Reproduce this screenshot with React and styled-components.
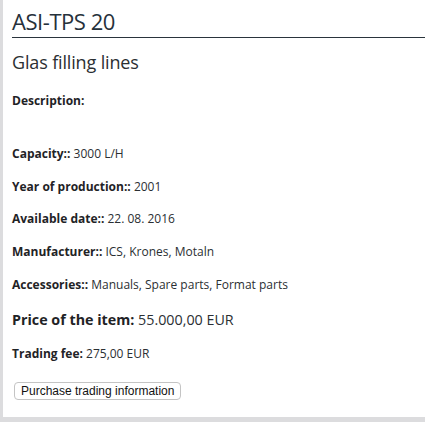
import styled, { createGlobalStyle } from "styled-components"

const Global = createGlobalStyle`
  body {
    margin: 0;
    background: #fff;
    font-family: "Open Sans", "DejaVu Sans", sans-serif;
    color: #2b2f33;
  }
`

const Panel = styled.div`
  box-sizing: border-box;
  height: 422px;
  border-left: 3px solid #dcdcde;
  border-bottom: 5px solid #dcdcde;
  padding: 6px 0 0 9px;
`

const Title = styled.h1`
  margin: 0;
  font-size: 22px;
  font-weight: 400;
  line-height: 30px;
  color: #26313b;
  border-bottom: 1px solid #2a343c;
  padding-bottom: 1px;
  letter-spacing: -0.45px;
`

const Subtitle = styled.h2`
  margin: 12px 0 19px;
  font-size: 18px;
  font-weight: 400;
  line-height: 24px;
  letter-spacing: -0.15px;
`

const Row = styled.p`
  margin: 0;
  font-size: 12px;
  line-height: 16px;
  height: ${(p) => p.h || 33}px;
  b {
    font-weight: 700;
    color: #1f2326;
  }
`

const Price = styled.p`
  margin: 0;
  font-size: 14.3px;
  line-height: 20px;
  height: 36px;
  b {
    color: #1f2326;
  }
`

const Button = styled.button`
  margin: 0 0 0 2px;
  font-family: "Liberation Sans", Arial, sans-serif;
  font-size: 12px;
  color: #111;
  background: #fff;
  border: 1px solid #c4c4c4;
  border-radius: 4px;
  padding: 1px 6px;
  height: 18px;
`

const rows = [
  ["Capacity::", "3000 L/H", 33],
  ["Year of production::", "2001", 32],
  ["Available date::", "22. 08. 2016", 33],
  ["Manufacturer::", "ICS, Krones, Motaln", 33],
  ["Accessories::", "Manuals, Spare parts, Format parts", 33],
]

const App = () => {
  return (
    <Panel>
      <Global />
      <Title>ASI-TPS 20</Title>
      <Subtitle>Glas filling lines</Subtitle>
      <Row h={53}>
        <b>Description:</b>
      </Row>
      {rows.map(([k, v, h]) => (
        <Row key={k} h={h}>
          <b>{k}</b> {v}
        </Row>
      ))}
      <Price>
        <b>Price of the item:</b> 55.000,00 EUR
      </Price>
      <Row h={32}>
        <b>Trading fee:</b> 275,00 EUR
      </Row>
      <Button>Purchase trading information</Button>
    </Panel>
  )
}

export default App
